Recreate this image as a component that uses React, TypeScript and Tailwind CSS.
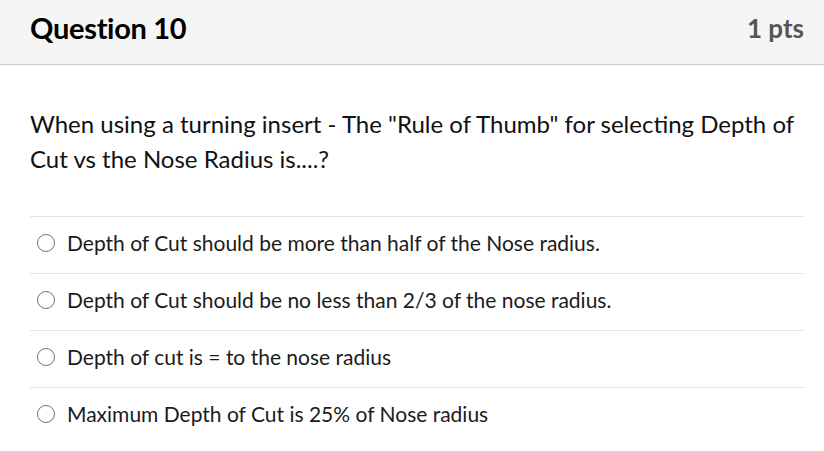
const answers = [
  'Depth of Cut should be more than half of the Nose radius.',
  'Depth of Cut should be no less than 2/3 of the nose radius.',
  'Depth of cut is = to the nose radius',
  'Maximum Depth of Cut is 25% of Nose radius',
];

export default function App() {
  return (
    <div className="w-[824px] h-[451px] bg-white overflow-hidden" style={{ fontFamily: 'Lato, "Open Sans", sans-serif' }}>
      <header className="h-[65px] bg-[#f5f5f5] border-b border-[#c7cdd1] flex items-center justify-between pl-[30px] pr-[20px] pb-[8px]">
        <h2 className="text-[29px] font-bold text-black tracking-[-0.3px]">Question 10</h2>
        <span className="text-[26px] font-bold text-[#555]">1 pts</span>
      </header>
      <div className="px-[30px] pt-[41px]">
        <p className="text-[24px] leading-[35px] text-[#111] font-normal">
          When using a turning insert - The "Rule of Thumb" for selecting Depth of Cut vs the Nose Radius is....?
        </p>
        <ul className="mt-[40px] -mr-[10px]">
          {answers.map((a) => (
            <li key={a} className="h-[57px] border-t border-[#e2e4e6] flex items-center pb-[4px]">
              <span className="ml-[7px] w-[18px] h-[18px] rounded-full border-[1.5px] border-[#6f7377] bg-white" />
              <span className="ml-[12px] text-[21px] text-[#1b1b1b]">{a}</span>
            </li>
          ))}
        </ul>
      </div>
    </div>
  );
}
